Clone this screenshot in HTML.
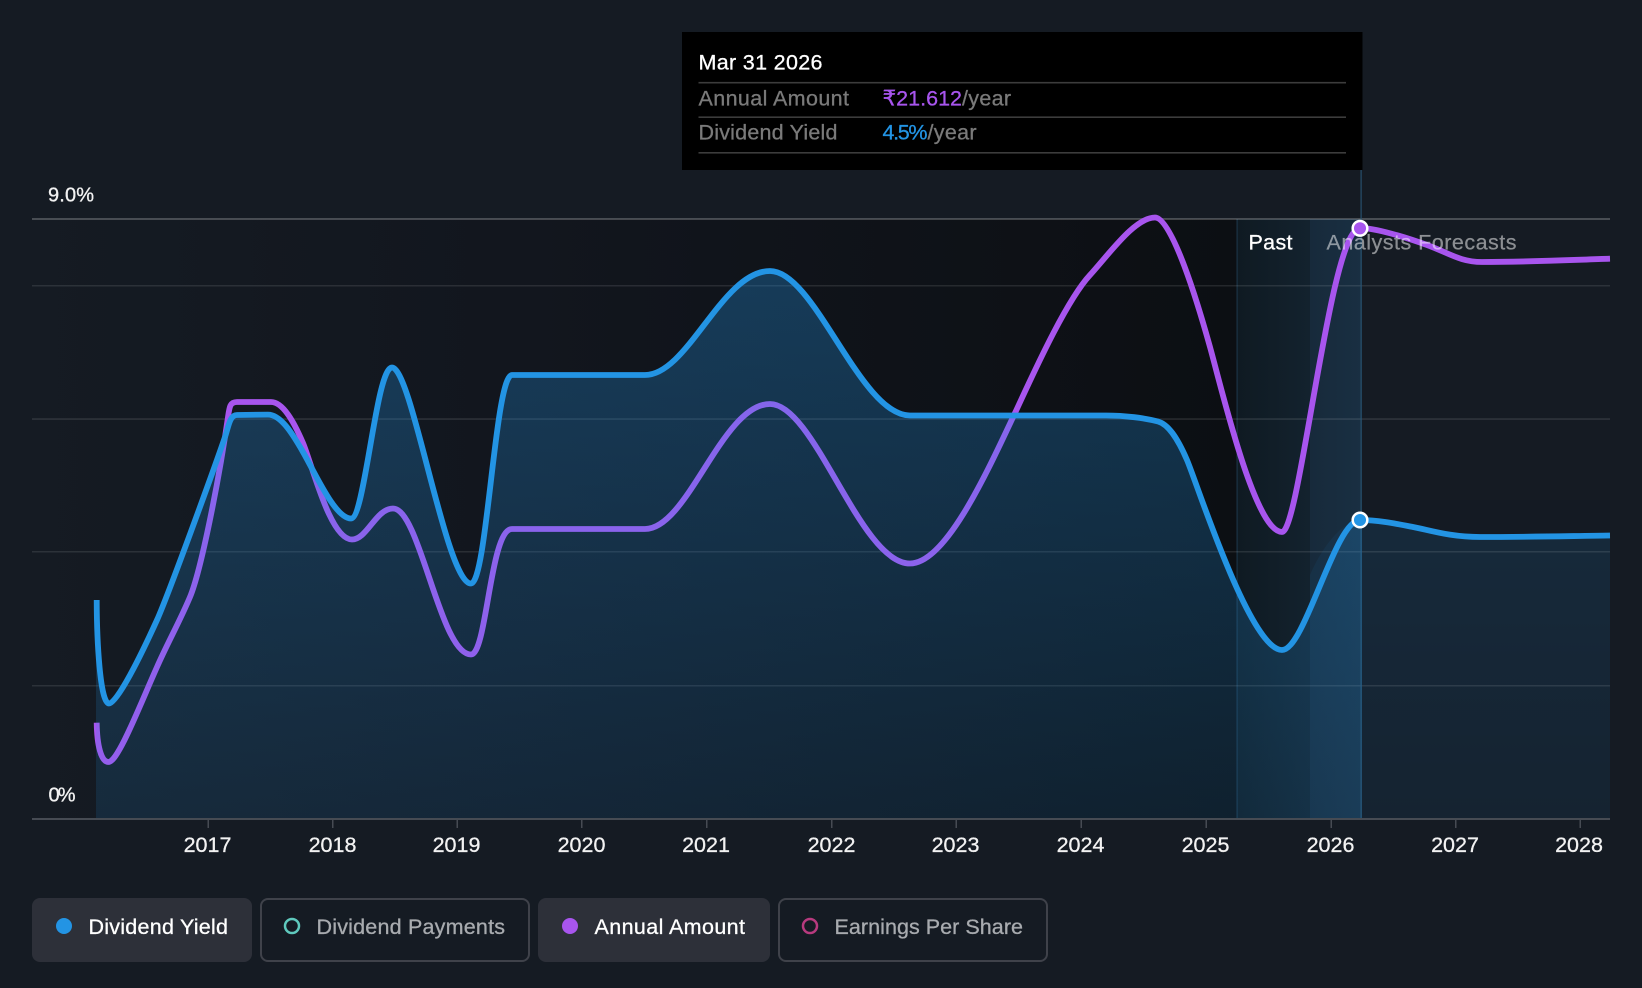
<!DOCTYPE html>
<html lang="en">
<head>
<meta charset="utf-8">
<title>Dividend Yield Chart</title>
<style>
html,body{margin:0;padding:0;background:#151b23;width:1642px;height:988px;overflow:hidden}
svg{display:block}
text{font-family:"Liberation Sans",Arial,sans-serif;font-size:21.5px;stroke-width:.3px}
.w{fill:#fff;stroke:#fff}
.o{fill:#f2f2f2;stroke:#f2f2f2}
.g{fill:#7a7a7a;stroke:#7a7a7a}
.l{fill:#a8abaf;stroke:#a8abaf}
.p{fill:#a855ee;stroke:#a855ee}
.b{fill:#2394e4;stroke:#2394e4}
</style>
</head>
<body>
<svg width="1642" height="988" viewBox="0 0 1642 988" xmlns="http://www.w3.org/2000/svg">
<defs>
<linearGradient id="dark" gradientUnits="userSpaceOnUse" x1="32" y1="0" x2="1237" y2="0">
<stop offset="0" stop-color="#151b23"/><stop offset=".4" stop-color="#12161e"/><stop offset="1" stop-color="#0c0f13"/>
</linearGradient>
<linearGradient id="band1" gradientUnits="userSpaceOnUse" x1="1237" y1="0" x2="1310" y2="0">
<stop offset="0" stop-color="#0f1a22"/><stop offset="1" stop-color="#13222e"/>
</linearGradient>
<linearGradient id="band2" gradientUnits="userSpaceOnUse" x1="1310" y1="0" x2="1362" y2="0">
<stop offset="0" stop-color="#172a3b"/><stop offset="1" stop-color="#192f42"/>
</linearGradient>
<linearGradient id="fillg" gradientUnits="userSpaceOnUse" x1="0" y1="270" x2="0" y2="819">
<stop offset="0" stop-color="#2394e4" stop-opacity=".31"/><stop offset="1" stop-color="#2394e4" stop-opacity=".13"/>
</linearGradient>
</defs>

<rect width="1642" height="988" fill="#151b23"/>
<rect x="32" y="219" width="1205" height="600" fill="url(#dark)"/>
<rect x="1237" y="219" width="73" height="600" fill="url(#band1)"/>
<rect x="1310" y="219" width="52" height="600" fill="url(#band2)"/>
<rect x="1236.5" y="219" width="1.2" height="600" fill="#1b3345"/>

<!-- grid -->
<g fill="#ffffff">
<rect x="32" y="218" width="1578" height="2" fill-opacity=".22"/>
<rect x="32" y="285" width="1578" height="1.5" fill-opacity=".1"/>
<rect x="32" y="418.3" width="1578" height="1.5" fill-opacity=".12"/>
<rect x="32" y="551" width="1578" height="1.5" fill-opacity=".1"/>
<rect x="32" y="685" width="1578" height="1.5" fill-opacity=".1"/>
</g>

<!-- marker line -->
<rect x="1360.5" y="170" width="1.2" height="649" fill="#274f6b"/>

<!-- purple line -->
<path fill="none" stroke="#a855ee" stroke-width="5.8" stroke-linecap="butt" stroke-linejoin="round" d="M96.7,722.7 C97,745 101,762 108.5,762 C118,762 140,705 157,667 C168,642 179,623 190,597 C201,570.6 219,480 228,417 C229.5,406.5 230,402 237,402 L271,402 C283,402 294,422 303,443 C312,464 330,539.5 352,539.5 C367,539.5 376,508.5 393,508.5 C420,508.5 440,654.5 471,654.5 C487,654.5 490,529 512,529 L645,529 C688,529 722,404 770,404 C815,404 860,563.5 910,563.5 C945,563.5 985,477 1015,413 C1030,381 1065,302 1090,275 C1110,253 1135,217.5 1155,217.5 C1172,217.5 1198,304 1210,347 C1222,390 1255,532 1282,532 C1300,532 1330,228 1360,228 C1375,228 1405,237 1427,245 C1449,253 1460,262 1482,262 C1530,262 1570,260 1610,258.7"/>

<!-- area fill -->
<path fill="url(#fillg)" d="M96,600 L96.7,600 C96.8,640 100,703.5 109,703.5 C117,703.5 140,657.4 157,620 C168,595.6 213,472 225,437 C228.5,427 229.5,415 237,415 L268,414.6 C280,414.6 291,431 303,452 C315,472.7 335,518.5 351,518.5 C365,518.5 376,367.5 392,367.5 C412,367.5 446,583.5 471,583.5 C487,583.5 495,375 512,375 L645,375 C688,375 722,271 770,271 C815,271 860,415.5 910,415.5 L1106,415.5 C1125,415.5 1145,418 1158,421.5 C1168,424.2 1177,437 1187,460 C1197,483 1250,650 1282,650 C1305,650 1335,520 1360,520 C1378,520 1395,523.5 1413,527 C1431,530.5 1450,537 1480,537 C1530,537 1570,536 1610,535.5 L1610,819 L96,819 Z"/>
<rect x="1362" y="500" width="248" height="319" fill="#151b23" fill-opacity=".45"/>
<rect x="1362" y="551" width="248" height="1.5" fill="#fff" fill-opacity=".06"/>
<rect x="1362" y="685" width="248" height="1.5" fill="#fff" fill-opacity=".06"/>
<path d="M1310,575 C1320,552 1335,530 1352,522 L1340,545 L1318,590 L1310,608 Z" fill="#2394e4" fill-opacity=".07"/>

<!-- blue line -->
<path fill="none" stroke="#2394e4" stroke-width="5.8" stroke-linecap="butt" stroke-linejoin="round" d="M96.7,600 C96.8,640 100,703.5 109,703.5 C117,703.5 140,657.4 157,620 C168,595.6 213,472 225,437 C228.5,427 229.5,415 237,415 L268,414.6 C280,414.6 291,431 303,452 C315,472.7 335,518.5 351,518.5 C365,518.5 376,367.5 392,367.5 C412,367.5 446,583.5 471,583.5 C487,583.5 495,375 512,375 L645,375 C688,375 722,271 770,271 C815,271 860,415.5 910,415.5 L1106,415.5 C1125,415.5 1145,418 1158,421.5 C1168,424.2 1177,437 1187,460 C1197,483 1250,650 1282,650 C1305,650 1335,520 1360,520 C1378,520 1395,523.5 1413,527 C1431,530.5 1450,537 1480,537 C1530,537 1570,536 1610,535.5"/>

<!-- axis -->
<rect x="32" y="818" width="1578" height="2" fill="#464b53"/>
<g fill="#464b53">
<rect x="207.5" y="819" width="1.5" height="9"/>
<rect x="332" y="819" width="1.5" height="9"/>
<rect x="456.5" y="819" width="1.5" height="9"/>
<rect x="581" y="819" width="1.5" height="9"/>
<rect x="706" y="819" width="1.5" height="9"/>
<rect x="831" y="819" width="1.5" height="9"/>
<rect x="955.5" y="819" width="1.5" height="9"/>
<rect x="1080.5" y="819" width="1.5" height="9"/>
<rect x="1205.5" y="819" width="1.5" height="9"/>
<rect x="1330.5" y="819" width="1.5" height="9"/>
<rect x="1455" y="819" width="1.5" height="9"/>
<rect x="1579.5" y="819" width="1.5" height="9"/>
</g>

<!-- dots -->
<circle cx="1360" cy="228.3" r="7.3" fill="#a855ee" stroke="#fff" stroke-width="2.5"/>
<circle cx="1360" cy="520" r="7.3" fill="#2394e4" stroke="#fff" stroke-width="2.5"/>

<!-- labels -->
<text class="o" x="48" y="201.5" style="font-size:20px" textLength="46" lengthAdjust="spacing">9.0%</text>
<text class="o" x="48.5" y="801.5" style="font-size:20px" textLength="27" lengthAdjust="spacing">0%</text>
<text class="w" x="1248.5" y="249.3" textLength="44" lengthAdjust="spacing">Past</text>
<text x="1326.5" y="249.3" fill="#ffffff" fill-opacity=".5" stroke="#ffffff" stroke-opacity=".25" textLength="190" lengthAdjust="spacing">Analysts Forecasts</text>

<g text-anchor="middle">
<text class="o" x="207.5" y="852">2017</text>
<text class="o" x="332.5" y="852">2018</text>
<text class="o" x="456.5" y="852">2019</text>
<text class="o" x="581.5" y="852">2020</text>
<text class="o" x="706" y="852">2021</text>
<text class="o" x="831.5" y="852">2022</text>
<text class="o" x="955.5" y="852">2023</text>
<text class="o" x="1080.5" y="852">2024</text>
<text class="o" x="1205.5" y="852">2025</text>
<text class="o" x="1330.5" y="852">2026</text>
<text class="o" x="1455" y="852">2027</text>
<text class="o" x="1579" y="852">2028</text>
</g>

<!-- tooltip -->
<rect x="682" y="32" width="680.5" height="138" fill="#000"/>
<g fill="#3c3c3c">
<rect x="698.5" y="81.9" width="647.5" height="1.6"/>
<rect x="698.5" y="116.4" width="647.5" height="1.6"/>
<rect x="698.5" y="152" width="647.5" height="1.6"/>
</g>
<text class="w" x="698.5" y="69.5" textLength="124" lengthAdjust="spacing">Mar 31 2026</text>
<text class="g" x="698.5" y="105.5" textLength="150.5" lengthAdjust="spacing">Annual Amount</text>
<text class="p" x="882.5" y="105.5" textLength="79.5" lengthAdjust="spacing">₹21.612</text>
<text class="g" x="962" y="105.5" textLength="49" lengthAdjust="spacing">/year</text>
<text class="g" x="698.5" y="139.5" textLength="139" lengthAdjust="spacing">Dividend Yield</text>
<text class="b" x="882.5" y="139.5" textLength="45" lengthAdjust="spacing">4.5%</text>
<text class="g" x="927.5" y="139.5" textLength="49" lengthAdjust="spacing">/year</text>

<!-- legend -->
<rect x="32" y="898" width="220" height="64" rx="8" fill="#2d3039"/>
<circle cx="64" cy="926" r="8" fill="#2394e4"/>
<text class="w" x="88.5" y="934" textLength="139.5" lengthAdjust="spacing">Dividend Yield</text>

<rect x="261" y="899" width="268" height="62" rx="7" fill="none" stroke="#3f424a" stroke-width="2"/>
<circle cx="292" cy="926" r="7" fill="none" stroke="#5fc9bd" stroke-width="2.5"/>
<text class="l" x="316.5" y="934" textLength="188.5" lengthAdjust="spacing">Dividend Payments</text>

<rect x="538" y="898" width="232" height="64" rx="8" fill="#2d3039"/>
<circle cx="570" cy="926" r="8" fill="#a855ee"/>
<text class="w" x="594.5" y="934" textLength="150.5" lengthAdjust="spacing">Annual Amount</text>

<rect x="779" y="899" width="268" height="62" rx="7" fill="none" stroke="#3f424a" stroke-width="2"/>
<circle cx="810" cy="926" r="7" fill="none" stroke="#b73a7e" stroke-width="2.5"/>
<text class="l" x="834.5" y="934" textLength="188.5" lengthAdjust="spacing">Earnings Per Share</text>
</svg>
</body>
</html>
